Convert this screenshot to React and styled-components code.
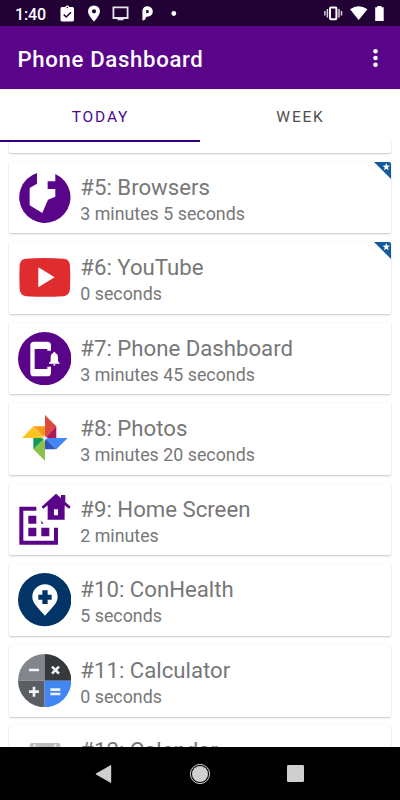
import React, { useState } from "react"
import styled, { createGlobalStyle, css } from "styled-components"

const GlobalStyle = createGlobalStyle`
    body {
        margin: 0;
        overflow: hidden;
        background-color: #fff;
        font-family: Roboto, sans-serif;
    }
`;

const Screen = styled.div`
    width: 400px;
    height: 800px;
    display: flex;
    flex-direction: column;
    overflow: hidden;
    background-color: #fff;
`;

const StatusBar = styled.div`
    height: 26px;
    flex: none;
    box-sizing: border-box;
    padding: 0 16px 0 15px;
    display: flex;
    align-items: center;
    justify-content: space-between;
    background-color: #220235;
`;

const Clock = styled.span`
    width: 44px;
    padding-top: 3px;
    color: #fff;
    font-size: 16px;
    line-height: 24px;
    font-weight: 500;
    letter-spacing: -0.1px;
`;

const StatusGroup = styled.div`
    display: flex;
    align-items: center;
`;

const AppBar = styled.header`
    height: 63px;
    flex: none;
    box-sizing: border-box;
    padding: 3px 22px 0 17.5px;
    display: flex;
    align-items: center;
    justify-content: space-between;
    background-color: #5a048a;
`;

const AppTitle = styled.h1`
    margin: 0;
    color: #fff;
    font-size: 22.2px;
    line-height: 28px;
    font-weight: 500;
    letter-spacing: 0.65px;
`;

const Tabs = styled.nav`
    height: 53px;
    flex: none;
    display: flex;
    background: linear-gradient(#f1f1f1, #fff 4px);
`;

const selectedTab = css`
    color: #4b0a8c;
    border-bottom-color: #310080;
`;

const Tab = styled.button`
    flex: 1;
    padding: 4px 0 0 1px;
    border: none;
    border-bottom: 2px solid transparent;
    background-color: transparent;
    color: #4e4e4e;
    font-family: inherit;
    font-size: 15.5px;
    font-weight: 400;
    letter-spacing: 1.8px;
    ${props => props.$selected && selectedTab}
`;

const AppList = styled.main`
    flex: 1;
    min-height: 0;
    overflow: hidden;
    padding: 0 8.7px;
`;

const Cards = styled.div`
    margin-top: -60.9px;
    display: grid;
    grid-auto-rows: 71.8px;
    row-gap: 8.73px;
`;

const Card = styled.article`
    position: relative;
    box-sizing: border-box;
    padding: 0 9.1px;
    display: flex;
    align-items: center;
    gap: 9.2px;
    overflow: hidden;
    border-radius: 2px;
    background-color: #fff;
`;

const CardShadow = styled.div`
    display: grid;
    border-radius: 2px;
    box-shadow: 0 1px 2px rgba(0, 0, 0, 0.22), 0 0 1px rgba(0, 0, 0, 0.1);
`;

const AppIcon = styled.svg`
    width: 53.3px;
    height: 53.3px;
    flex: none;
`;

const CardText = styled.div`
    padding-top: 3px;
    display: flex;
    flex-direction: column;
    color: #777;
    white-space: nowrap;
`;

const CardTitle = styled.span`
    font-size: 22.2px;
    line-height: 28px;
    letter-spacing: 0;
`;

const CardTime = styled.span`
    font-size: 17.8px;
    line-height: 25px;
    letter-spacing: 0.02px;
`;

const Badge = styled.svg`
    position: absolute;
    top: 0;
    right: 0;
    width: 17px;
    height: 17px;
`;

const NavBar = styled.footer`
    height: 53px;
    flex: none;
    display: grid;
    grid-template-columns: 96px 96px 96px;
    justify-content: center;
    align-items: center;
    justify-items: center;
    background-color: #000;
`;

const BrowserIcon = () => (
    <AppIcon viewBox="0 0 160 160">
        <path fill="#5a048a" d="M57 5.7V38L35 51V103L73 126L90 86L112 77V54H89V31H112V8.7A77 77 0 1 1 57 5.7Z" />
    </AppIcon>
);

const YouTubeIcon = () => (
    <AppIcon viewBox="0 0 160 160">
        <path fill="#df2c2e" d="M24 23Q80 19 137 23Q154 24 156 43Q158 79 156 115Q154 134 137 136Q80 139 24 136Q7 134 5 115Q3 79 5 43Q7 24 24 23Z" />
        <path fill="#fff" d="M61 49L110 79L61 109Z" />
    </AppIcon>
);

const DashboardIcon = () => (
    <AppIcon viewBox="0 0 160 160">
        <circle cx="80" cy="80" r="80" fill="#5a048a" />
        <path fill="#fff" d="M48 29H87Q99 29 99 40V56H88V51H50V111H88V104H99V122Q99 133 87 133H48Q37 133 37 122V40Q37 29 48 29Z" />
        <path fill="#fff" d="M109 59Q112 59 112 63Q120 66 120 76V88L125 93V95H93V93L98 88V76Q98 66 106 63Q106 59 109 59ZM105 97H113Q112 101 109 101Q106 101 105 97Z" />
    </AppIcon>
);

const PhotosIcon = () => (
    <AppIcon viewBox="0 0 160 160">
        <path fill="#db4a3c" d="M81 9L115 43L81 78Z" />
        <path fill="#b01657" d="M115 43V78H81Z" />
        <path fill="#fdc321" d="M12 78L46 43L81 78Z" />
        <path fill="#f79a1c" d="M46 43H81V78Z" />
        <path fill="#4285f4" d="M81 78H149L115 112Z" />
        <path fill="#3155b8" d="M81 78V112H115Z" />
        <path fill="#8bc34a" d="M81 78V146L46 112Z" />
        <path fill="#119a5b" d="M46 78H81L46 112Z" />
        <path fill="#fff" d="M80 68L83 75L91 78L83 81L80 89L77 81L70 78L77 75Z" />
    </AppIcon>
);

const HomeIcon = () => (
    <AppIcon viewBox="0 0 160 160">
        <g fill="#5a048a">
            <path d="M4 41H55V53H16V143H108V104H120V155H4Z" />
            <path d="M31 68H55V92H31ZM31 104H55V130H31ZM70 104H94V130H70ZM68 82L77 92H70V88Z" />
            <path fillRule="evenodd" d="M114 2L129 15V6H142V27L158 41L153 47L140 37V80H89V37L76 47L71 41ZM108 49V67H120V49Z" />
        </g>
    </AppIcon>
);

const HealthIcon = () => (
    <AppIcon viewBox="0 0 160 160">
        <circle cx="80" cy="80" r="80" fill="#023467" />
        <path fill="#fff" d="M81 34C102 34 119 51 119 71C119 91 101 105 81 128C61 105 43 91 43 71C43 51 60 34 81 34Z" />
        <path fill="#023467" d="M73 52H89V65H101V80H89V93H73V80H61V65H73Z" />
    </AppIcon>
);

const CalculatorIcon = () => (
    <AppIcon viewBox="0 0 160 160">
        <path fill="#80868b" d="M80 80V0A80 80 0 0 0 0 80Z" />
        <path fill="#35393c" d="M80 80V0A80 80 0 0 1 160 80Z" />
        <path fill="#5b5f64" d="M80 80V160A80 80 0 0 1 0 80Z" />
        <path fill="#4285f4" d="M80 80V160A80 80 0 0 0 160 80Z" />
        <path fill="none" stroke="#f1f3f4" strokeWidth="8" d="M33 48H63M33 113H63M48 98V128M102 38L123 59M123 38L102 59M97 107H127M97 120H127" />
    </AppIcon>
);

const CalendarIcon = () => (
    <AppIcon viewBox="0 0 160 160">
        <rect x="35" y="27" width="92" height="106" rx="6" fill="#bdbdbd" />
        <path fill="#eee" d="M47 31H53V41H47ZM109 31H115V41H109Z" />
    </AppIcon>
);

const StarBadge = () => (
    <Badge viewBox="0 0 17 17">
        <path fill="#155a9f" d="M0 0H17V17Z" />
        <path fill="#fff" d="M12.3 1L13.3 3.6L16 3.8L13.9 5.5L14.6 8.2L12.3 6.7L10 8.2L10.7 5.5L8.6 3.8L11.3 3.6Z" />
    </Badge>
);

const apps = [
    { rank: 5, name: "Browsers", time: "3 minutes 5 seconds", Icon: BrowserIcon, starred: true },
    { rank: 6, name: "YouTube", time: "0 seconds", Icon: YouTubeIcon, starred: true },
    { rank: 7, name: "Phone Dashboard", time: "3 minutes 45 seconds", Icon: DashboardIcon },
    { rank: 8, name: "Photos", time: "3 minutes 20 seconds", Icon: PhotosIcon },
    { rank: 9, name: "Home Screen", time: "2 minutes", Icon: HomeIcon },
    { rank: 10, name: "ConHealth", time: "5 seconds", Icon: HealthIcon },
    { rank: 11, name: "Calculator", time: "0 seconds", Icon: CalculatorIcon },
    { rank: 12, name: "Calendar", Icon: CalendarIcon }
];

const AppCard = ({ rank, name, time, Icon, starred }) => (
    <CardShadow>
        <Card>
            <Icon />
            <CardText>
                <CardTitle>#{rank}: {name}</CardTitle>
                <CardTime>{time || "\u00a0"}</CardTime>
            </CardText>
            {starred && <StarBadge />}
        </Card>
    </CardShadow>
);

const App = () => {
    const [tab, setTab] = useState("today");

    return (
        <>
            <GlobalStyle />
            <Screen>
                <StatusBar>
                    <StatusGroup>
                        <Clock>1:40</Clock>
                        <svg width="122" height="26" viewBox="59 0 122 26">
                            <path fill="#fff" fillRule="evenodd" d="M62 7H65.2A2.2 2.2 0 0 1 69.3 7H72.5Q74 7 74 8.5V20Q74 21.4 72.5 21.4H62Q60.5 21.4 60.5 20V8.5Q60.5 7 62 7ZM66.5 7.5A.8 .8 0 1 0 68.1 7.5A.8 .8 0 1 0 66.5 7.5Z" />
                            <path fill="none" stroke="#220235" strokeWidth="1.5" d="M63.7 14.5L66.2 17L71 12.2" />
                            <path fill="#fff" fillRule="evenodd" d="M94 5.4A6 6 0 0 1 100 11.3C100 15.5 94 21.6 94 21.6S88 15.5 88 11.3A6 6 0 0 1 94 5.4ZM94 9.2A2.1 2.1 0 1 0 94 13.4A2.1 2.1 0 1 0 94 9.2Z" />
                            <path fill="none" stroke="#e8e5ea" strokeWidth="1.8" d="M113.4 7.4H127.6V18H113.4ZM117.5 19.4H123.5" />
                            <path fill="#fff" fillRule="evenodd" d="M147.2 6.3C150.6 6.3 152.8 8.6 152.8 11.6C152.8 14.6 150.4 16.8 147.2 16.8H146.2Q145.8 20.4 142.4 20.4V11.3C142.4 8.3 144.2 6.3 147.2 6.3ZM146.2 9.9V13.3H147.2A1.7 1.7 0 0 0 147.2 9.9Z" />
                            <circle cx="173.8" cy="13.5" r="2.4" fill="#fff" />
                        </svg>
                    </StatusGroup>
                    <svg width="62" height="26" viewBox="322 0 62 26">
                        <rect x="330" y="7.4" width="6.4" height="11.8" rx="1" fill="none" stroke="#fff" strokeWidth="2" />
                        <path stroke="#d8cfdf" strokeWidth="1.5" d="M327.4 9V17.5M324.9 11V15.5M339 9V17.5M341.5 11V15.5" />
                        <path fill="#fff" d="M350 9.3Q358.7 3.2 367.4 9.3L358.7 20Z" />
                        <path fill="#fff" d="M377.3 6H381.5V7.3H383.7V21H375.2V7.3H377.3Z" />
                    </svg>
                </StatusBar>
                <AppBar>
                    <AppTitle>Phone Dashboard</AppTitle>
                    <svg width="5" height="20" viewBox="0 1 5 20" fill="#fff">
                        <circle cx="2.5" cy="3.3" r="2.3" />
                        <circle cx="2.5" cy="10" r="2.3" />
                        <circle cx="2.5" cy="16.7" r="2.3" />
                    </svg>
                </AppBar>
                <Tabs>
                    <Tab $selected={tab === "today"} onClick={() => setTab("today")}>TODAY</Tab>
                    <Tab $selected={tab === "week"} onClick={() => setTab("week")}>WEEK</Tab>
                </Tabs>
                <AppList>
                    <Cards>
                        <CardShadow />
                        {apps.map(app => <AppCard key={app.rank} {...app} />)}
                    </Cards>
                </AppList>
                <NavBar>
                    <svg width="18" height="20" viewBox="0 0 18 20">
                        <path fill="#cfcfcf" d="M15.5 1.2Q16.2 .8 16.2 1.8V18.2Q16.2 19.2 15.4 18.8L1 10.5Q.3 10 1 9.5Z" />
                    </svg>
                    <svg width="22" height="22" viewBox="0 0 22 22">
                        <circle cx="11" cy="11" r="9.6" fill="none" stroke="#cfcfcf" strokeWidth="1" />
                        <circle cx="11" cy="11" r="8" fill="#cfcfcf" />
                    </svg>
                    <svg width="18" height="17" viewBox="0 0 18 17">
                        <rect width="17" height="17" rx="1.3" fill="#cfcfcf" />
                    </svg>
                </NavBar>
            </Screen>
        </>
    )
};

export default App;
